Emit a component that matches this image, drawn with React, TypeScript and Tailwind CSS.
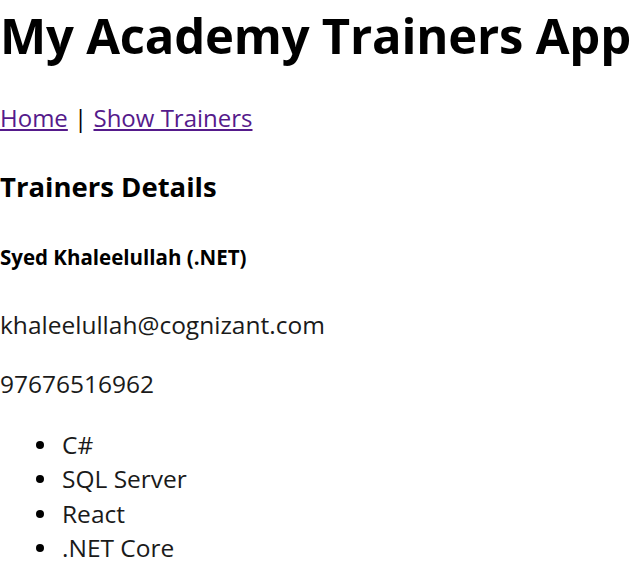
import React from "react";

const skills = ["C#", "SQL Server", "React", ".NET Core"];

export default function App() {
  return (
    <div className="min-h-screen bg-white font-['Open_Sans',sans-serif] text-black">
      <h1 className="mt-[5px] text-[49px] font-bold leading-[60px] tracking-[-0.2px]">My Academy Trainers App</h1>

      <div className="mt-[36px] text-[24px] leading-[34px]">
        <a href="#" className="text-[#551a8b] underline">Home</a>
        {" | "}
        <a href="#" className="text-[#551a8b] underline">Show Trainers</a>
      </div>

      <h3 className="mt-[32px] text-[27.5px] font-bold leading-[40px]">Trainers Details</h3>

      <h5 className="mt-[36px] text-[20.5px] font-bold leading-[28px]">Syed Khaleelullah (.NET)</h5>

      <p className="mt-[37px] text-[24.5px] leading-[34px] text-[#1a1a1a]">khaleelullah@cognizant.com</p>
      <p className="mt-[25px] text-[24.5px] leading-[34px] text-[#1a1a1a]">97676516962</p>

      <ul className="mt-[27px] text-[24.5px] leading-[34.3px] text-[#1a1a1a]">
        {skills.map((s) => (
          <li key={s} className="flex items-center">
            <span className="ml-[36px] mr-[18px] h-[8px] w-[8px] rounded-full bg-black" />
            {s}
          </li>
        ))}
      </ul>
    </div>
  );
}
